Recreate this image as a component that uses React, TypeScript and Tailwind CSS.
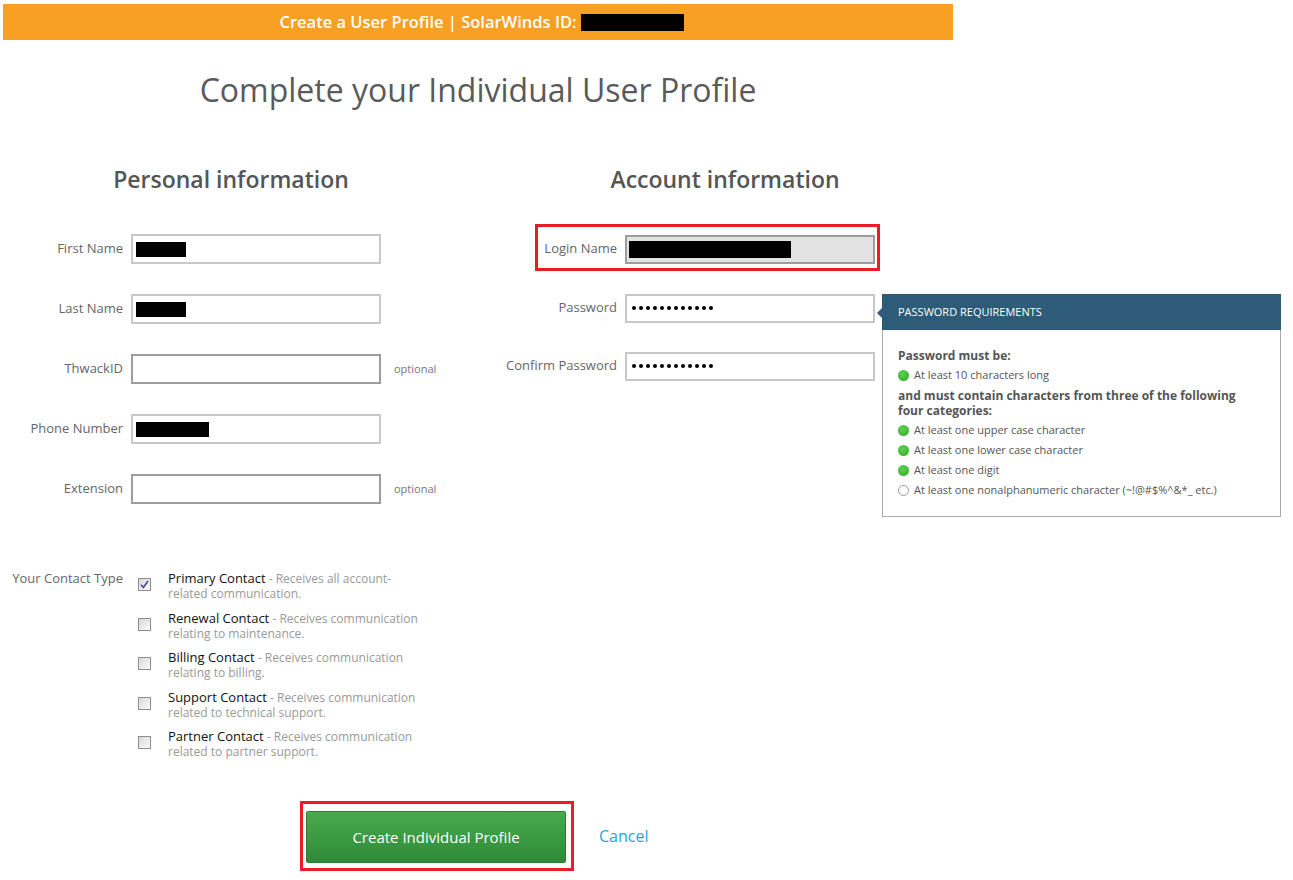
import React from 'react';

const font = { fontFamily: '"Open Sans", "Liberation Sans", Arial, sans-serif' };

type RowProps = {
  label: string;
  redact?: number;
  empty?: boolean;
  optional?: boolean;
};

function PersonalRow({ label, redact, empty, optional }: RowProps) {
  return (
    <div className="flex h-[30px] items-center">
      <label className="w-[123px] text-right text-[13px] text-[#666]">{label}</label>
      <div
        className={`ml-[8px] flex h-[30px] w-[250px] items-center border-2 bg-white pl-[3px] ${
          empty ? 'border-[#9d9d9d]' : 'border-[#c8c8c8]'
        }`}
      >
        {redact ? <div className="h-[15px] bg-black" style={{ width: redact }} /> : null}
      </div>
      {optional && <span className="ml-[13px] text-[11px] text-[#777]">optional</span>}
    </div>
  );
}

function Dots() {
  return (
    <div className="ml-[5px] flex gap-[3px]">
      {Array.from({ length: 12 }).map((_, i) => (
        <span key={i} className="h-[4px] w-[4px] rounded-full bg-black" />
      ))}
    </div>
  );
}

function AccountRow({ label, children, className = '' }: { label: string; children?: React.ReactNode; className?: string }) {
  return (
    <div className={`flex h-[30px] items-center ${className}`}>
      <label className="w-[155px] text-right text-[13px] text-[#666]">{label}</label>
      <div className="ml-[8px] flex h-[29px] w-[250px] items-center border-2 border-[#c8c8c8] bg-white">{children}</div>
    </div>
  );
}

function Dot({ ok }: { ok: boolean }) {
  return ok ? (
    <span className="h-[11px] w-[11px] shrink-0 rounded-full bg-[radial-gradient(circle_at_40%_35%,#5fd24f,#2ea82a)]" />
  ) : (
    <span className="h-[11px] w-[11px] shrink-0 rounded-full border border-[#9a9a9a] bg-white" />
  );
}

function Req({ ok, children }: { ok: boolean; children: React.ReactNode }) {
  return (
    <div className="flex h-[20px] items-center gap-[5px] text-[11px] text-[#555]">
      <Dot ok={ok} />
      <span>{children}</span>
    </div>
  );
}

function Checkbox({ checked }: { checked?: boolean }) {
  return (
    <span className="mt-[7px] flex h-[13px] w-[13px] shrink-0 items-center justify-center border border-[#8e8e8e] bg-gradient-to-br from-[#d8d8d8] to-[#fbfbfb]">
      {checked && (
        <svg width="9" height="9" viewBox="0 0 9 9">
          <path d="M1 4.8 L3.4 7.4 L8 1" fill="none" stroke="#3b4f9a" strokeWidth="1.6" />
        </svg>
      )}
    </span>
  );
}

const contacts = [
  { title: 'Primary Contact', desc: 'Receives all account-related communication.', checked: true },
  { title: 'Renewal Contact', desc: 'Receives communication relating to maintenance.' },
  { title: 'Billing Contact', desc: 'Receives communication relating to billing.' },
  { title: 'Support Contact', desc: 'Receives communication related to technical support.' },
  { title: 'Partner Contact', desc: 'Receives communication related to partner support.' },
];

export default function App() {
  return (
    <div className="min-h-[880px] w-[1293px] bg-white" style={font}>
      <div className="ml-[3px] pt-[4px]">
        <div className="flex h-[36px] w-[950px] items-center justify-center bg-[#f7a023] pl-[7px] text-[16.5px] font-semibold text-white">
          <span>Create a User Profile | SolarWinds ID:</span>
          <span className="ml-[4px] h-[17px] w-[103px] bg-black" />
        </div>
        <h1 className="mt-[30px] w-[950px] text-center text-[32px] leading-[40px] font-normal text-[#5a5a5a]">
          Complete your Individual User Profile
        </h1>
      </div>

      <div className="mt-[55px] flex items-start">
        {/* personal */}
        <div className="w-[462px]">
          <h2 className="text-center text-[23px] leading-[28px] font-semibold text-[#555]">Personal information</h2>
          <div className="mt-[41px] flex flex-col gap-[30px]">
            <PersonalRow label="First Name" redact={50} />
            <PersonalRow label="Last Name" redact={50} />
            <PersonalRow label="ThwackID" empty optional />
            <PersonalRow label="Phone Number" redact={73} />
            <PersonalRow label="Extension" empty optional />
          </div>
        </div>

        {/* account */}
        <div>
          <h2 className="w-[526px] text-center text-[23px] leading-[28px] font-semibold text-[#555]">Account information</h2>
          <div className="relative mt-[41px]">
            <div className="pointer-events-none absolute left-[73px] top-[-10px] h-[47px] w-[345px] border-[3px] border-[#ed1c24]" />
            <div className="flex h-[30px] items-center">
              <label className="w-[155px] text-right text-[13px] text-[#666]">Login Name</label>
              <div className="ml-[8px] flex h-[29px] w-[250px] items-center border-2 border-[#9d9d9d] bg-[#e3e3e3] pl-[2px]">
                <div className="h-[17px] w-[162px] bg-black" />
              </div>
            </div>
          </div>
          <div className="mt-[29px] flex items-start">
            <div className="w-[413px]">
              <AccountRow label="Password">
                <Dots />
              </AccountRow>
              <AccountRow label="Confirm Password" className="mt-[28px]">
                <Dots />
              </AccountRow>
            </div>
            <div className="relative ml-[7px] mt-[1px] w-[399px] border border-[#aaa] border-t-0">
              <span className="absolute left-[-6px] top-[13px] h-0 w-0 border-y-[6px] border-r-[6px] border-y-transparent border-r-[#2e5b77]" />
              <div className="-mx-px flex h-[36px] items-center bg-[#2e5b77] pl-[16px] text-[11px] text-white">PASSWORD REQUIREMENTS</div>
              <div className="pl-[15px] pr-[30px] pt-[15px] pb-[16px]">
                <div className="py-[2.5px] text-[12px] font-bold leading-[15px] text-[#555]">Password must be:</div>
                <Req ok>At least 10 characters long</Req>
                <div className="py-[2.5px] text-[12px] font-bold leading-[15px] text-[#555]">
                  and must contain characters from three of the following four categories:
                </div>
                <Req ok>At least one upper case character</Req>
                <Req ok>At least one lower case character</Req>
                <Req ok>At least one digit</Req>
                <Req ok={false}>
                  <span className="whitespace-nowrap">At least one nonalphanumeric character (~!@#$%^&amp;*_ etc.)</span>
                </Req>
              </div>
            </div>
          </div>
        </div>
      </div>

      {/* contact type */}
      <div className="mt-[54px] flex">
        <div className="w-[123px] text-right text-[13px] leading-[15px] text-[#666]">Your Contact Type</div>
        <div className="ml-[15px] flex flex-col gap-[9.5px]">
          {contacts.map((c) => (
            <div key={c.title} className="flex">
              <Checkbox checked={c.checked} />
              <p className="ml-[17px] w-[252px] text-[13px] leading-[15px] text-[#111]">
                {c.title}
                <span className="text-[12px] text-[#999]"> - {c.desc}</span>
              </p>
            </div>
          ))}
        </div>
      </div>

      {/* actions */}
      <div className="ml-[300px] mt-[42px] flex items-center">
        <div className="border-[3px] border-[#ed1c24] pl-[3px] pr-[5px] pt-[7px] pb-[5px]">
          <button className="h-[52px] w-[260px] rounded-[2px] border border-[#2b7f33] bg-gradient-to-b from-[#48aa4d] to-[#2f8a39] text-[15px] text-white">
            Create Individual Profile
          </button>
        </div>
        <a className="ml-[25px] text-[16px] text-[#1ea7da]">Cancel</a>
      </div>
    </div>
  );
}
